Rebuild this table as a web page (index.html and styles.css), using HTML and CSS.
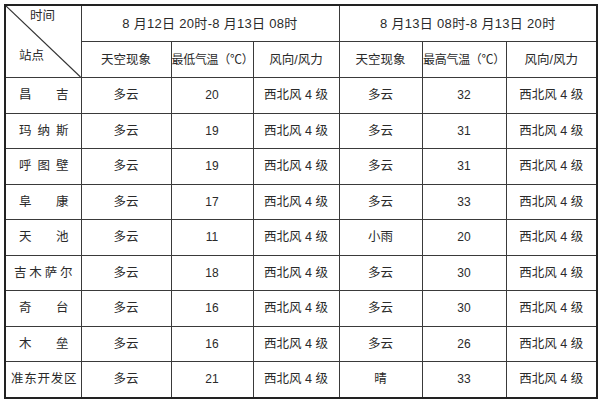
FILE: index.html
```html
<!DOCTYPE html>
<html lang="zh">
<head>
<meta charset="utf-8">
<link rel="stylesheet" href="styles.css">
</head>
<body>
<table class="fc">
  <colgroup>
    <col class="c1"><col class="c2"><col class="c3"><col class="c4"><col class="c5"><col class="c6"><col class="c7">
  </colgroup>
  <tr class="h1">
    <td class="corner" rowspan="2">
      <svg class="diag" viewBox="0 0 100 100" preserveAspectRatio="none"><line x1="0" y1="0" x2="100" y2="100" stroke="#333" stroke-width="1.2" vector-effect="non-scaling-stroke"/></svg>
      <span class="t-time">时间</span>
      <span class="t-site">站点</span>
    </td>
    <td colspan="3" class="period">8 月12日 20时-8 月13日 08时</td>
    <td colspan="3" class="period">8 月13日 08时-8 月13日 20时</td>
  </tr>
  <tr class="h2">
    <td>天空现象</td><td class="sm">最低气温（℃）</td><td>风向/风力</td>
    <td>天空现象</td><td class="sm">最高气温（℃）</td><td>风向/风力</td>
  </tr>
  <tr><td class="st">昌吉</td><td>多云</td><td class="n">20</td><td>西北风 4 级</td><td>多云</td><td class="n">32</td><td>西北风 4 级</td></tr>
  <tr><td class="st">玛纳斯</td><td>多云</td><td class="n">19</td><td>西北风 4 级</td><td>多云</td><td class="n">31</td><td>西北风 4 级</td></tr>
  <tr><td class="st">呼图壁</td><td>多云</td><td class="n">19</td><td>西北风 4 级</td><td>多云</td><td class="n">31</td><td>西北风 4 级</td></tr>
  <tr><td class="st">阜康</td><td>多云</td><td class="n">17</td><td>西北风 4 级</td><td>多云</td><td class="n">33</td><td>西北风 4 级</td></tr>
  <tr><td class="st">天池</td><td>多云</td><td class="n">11</td><td>西北风 4 级</td><td>小雨</td><td class="n">20</td><td>西北风 4 级</td></tr>
  <tr><td class="st full">吉木萨尔</td><td>多云</td><td class="n">18</td><td>西北风 4 级</td><td>多云</td><td class="n">30</td><td>西北风 4 级</td></tr>
  <tr><td class="st">奇台</td><td>多云</td><td class="n">16</td><td>西北风 4 级</td><td>多云</td><td class="n">30</td><td>西北风 4 级</td></tr>
  <tr><td class="st">木垒</td><td>多云</td><td class="n">16</td><td>西北风 4 级</td><td>多云</td><td class="n">26</td><td>西北风 4 级</td></tr>
  <tr><td class="st full2">准东开发区</td><td>多云</td><td class="n">21</td><td>西北风 4 级</td><td>晴</td><td class="n">33</td><td>西北风 4 级</td></tr>
</table>
</body>
</html>
```
FILE: styles.css
```css
html, body {
  margin: 0;
  padding: 0;
  background: #fff;
}
body {
  padding: 4px 0 0 4px;
  font-family: "Liberation Sans", "Noto Sans CJK SC", sans-serif;
  font-size: 12.5px;
  color: #2a2a2a;
}
.fc {
  border-collapse: collapse;
  table-layout: fixed;
  width: 592px;
  border: 2px solid #222;
}
.c1 { width: 76px; }
.c2 { width: 90px; }
.c3 { width: 82px; }
.c4 { width: 86px; }
.c5 { width: 83px; }
.c6 { width: 84px; }
.c7 { width: 91px; }
.fc td {
  border: 1px solid #3a3a3a;
  text-align: center;
  vertical-align: middle;
  padding: 0;
  height: 34.5px;
  line-height: 16px;
  white-space: nowrap;
}
.fc tr.h1 td { height: 35px; }
.fc tr.h2 td { height: 35px; }
.period {
  letter-spacing: 0.3px;
  font-size: 13px;
}
.sm {
  font-size: 12px;
  letter-spacing: -0.3px;
}
.n {
  font-size: 12px;
}
.corner {
  position: relative;
}
.diag {
  position: absolute;
  left: 0;
  top: 0;
  width: 100%;
  height: 100%;
}
.t-time {
  position: absolute;
  left: 24px;
  top: 2px;
}
.t-site {
  position: absolute;
  left: 13px;
  top: 42px;
}
.fc td.st {
  text-align: justify;
  text-align-last: justify;
  padding: 0 12px 0 13px;
}
.fc td.st.full {
  padding: 0 8px;
}
.fc td.st.full2 {
  padding: 0 4px 0 5px;
}
```
